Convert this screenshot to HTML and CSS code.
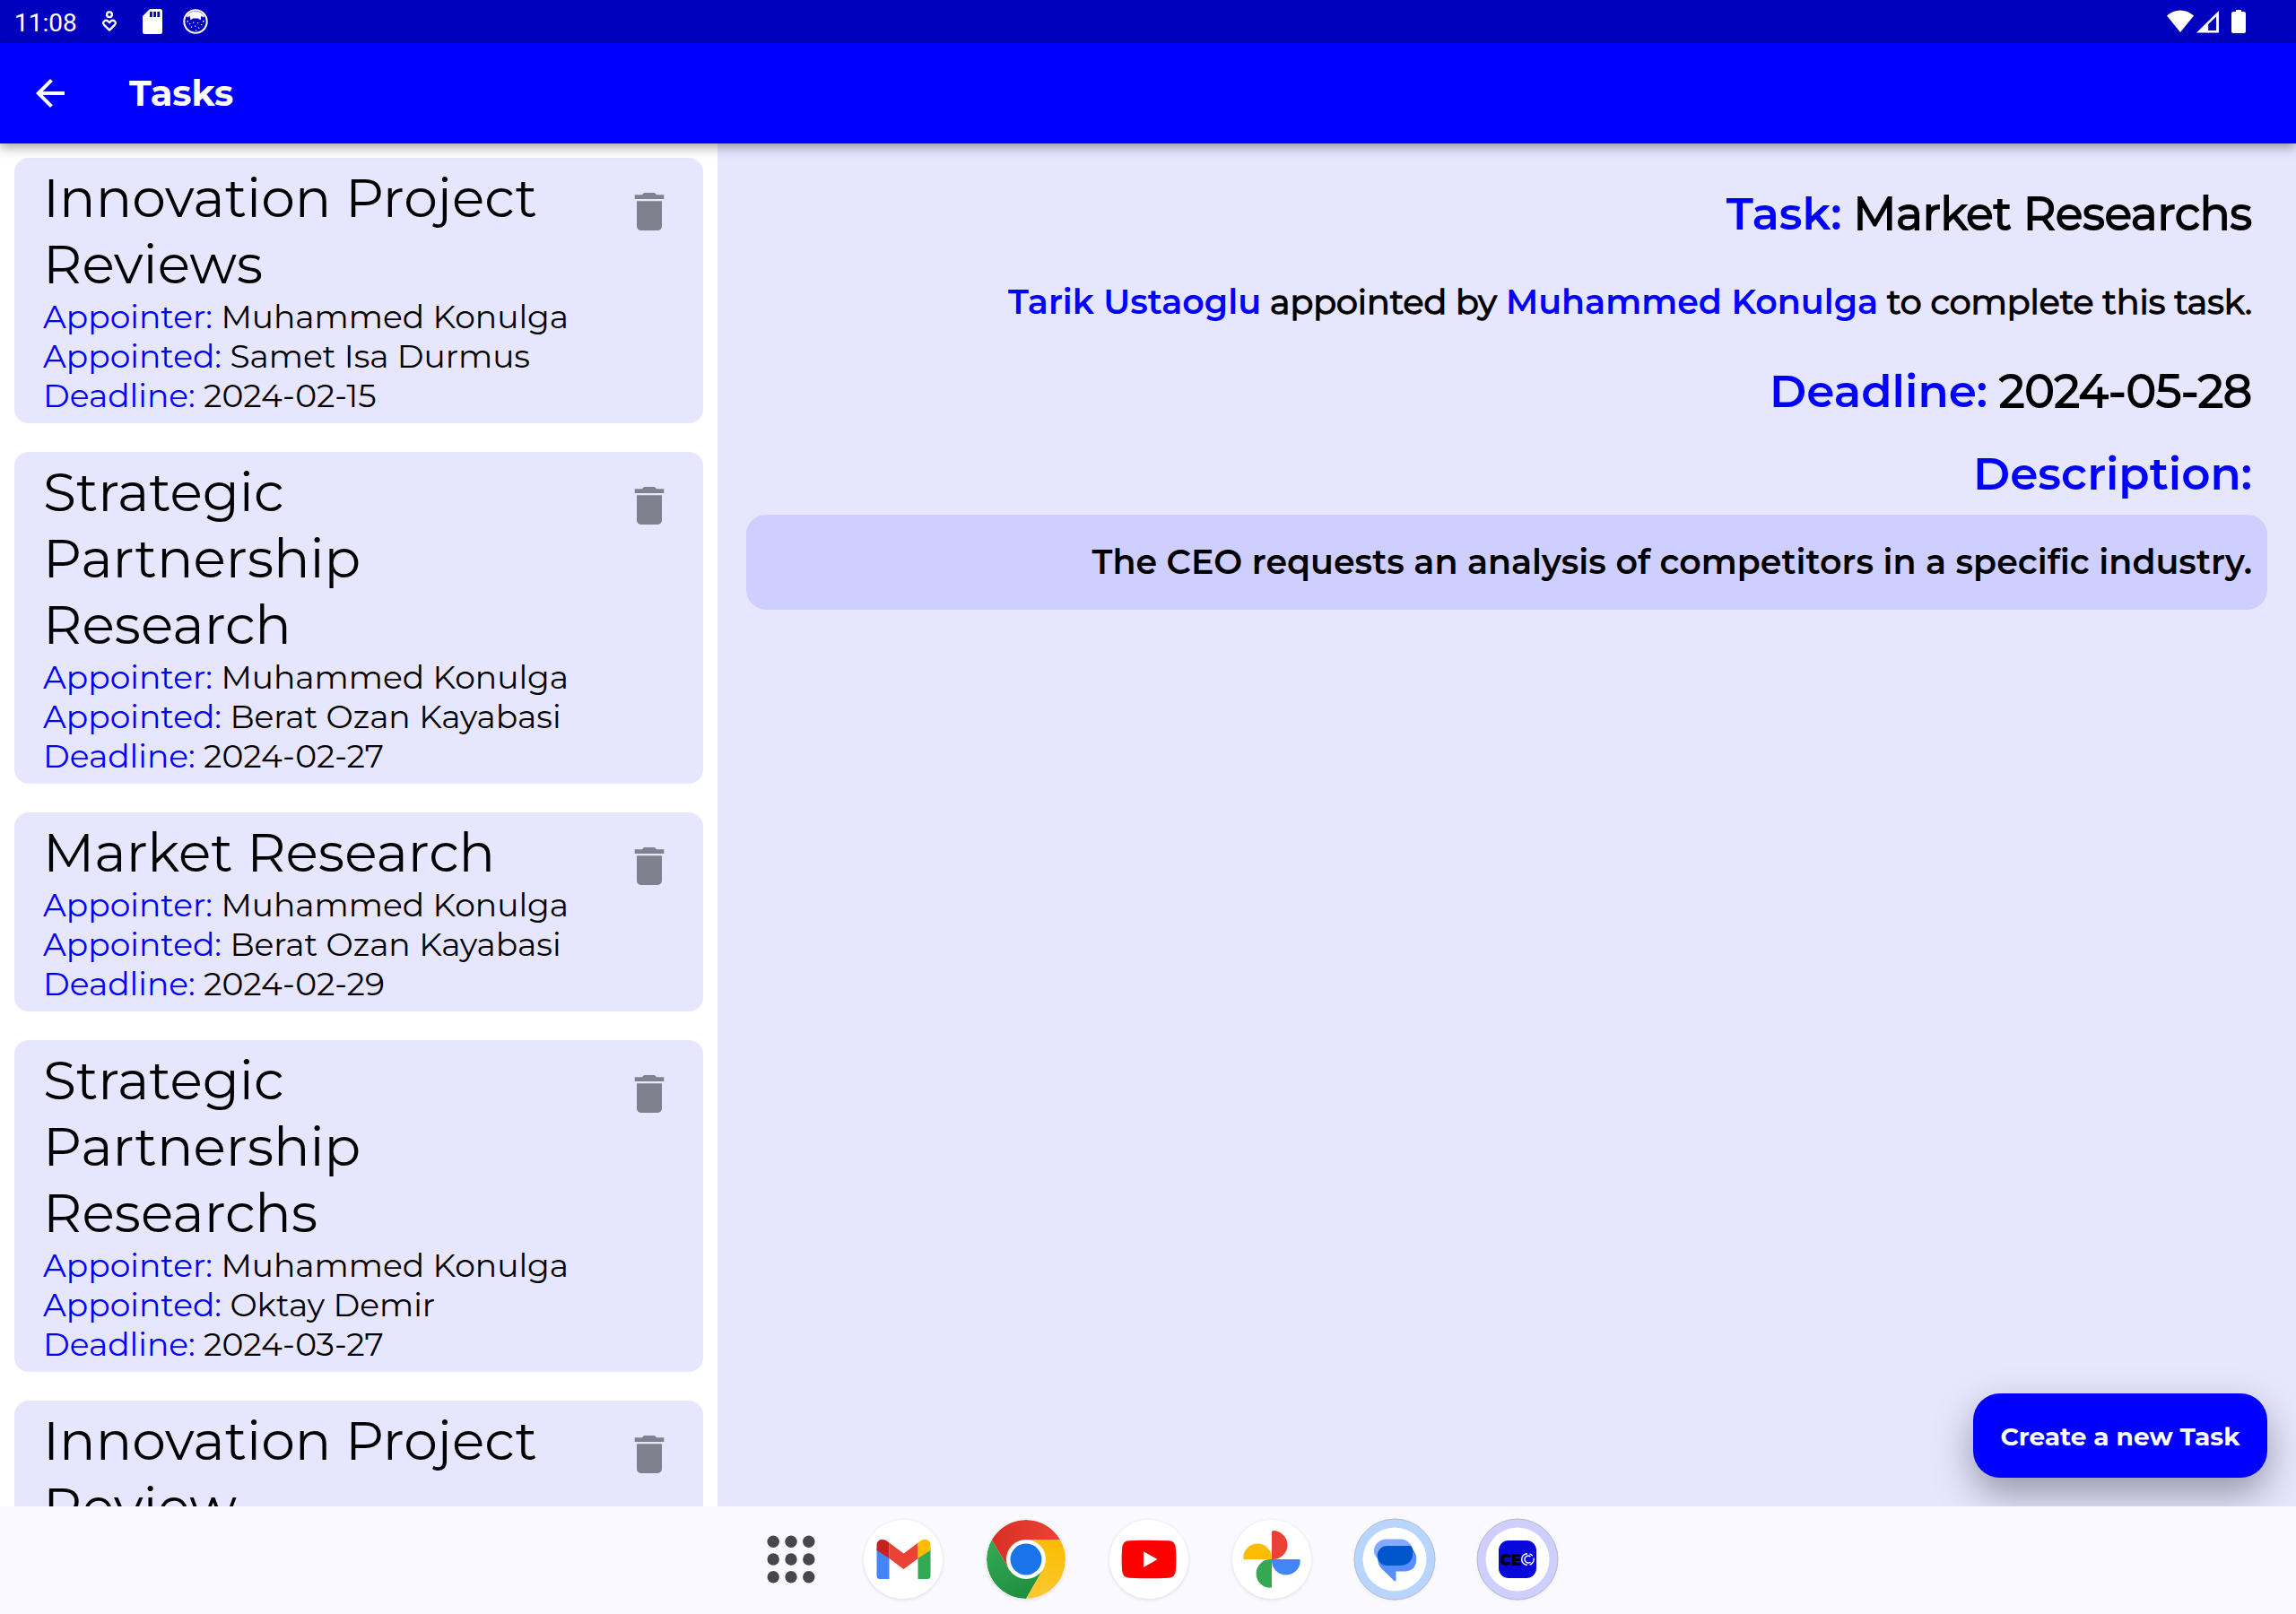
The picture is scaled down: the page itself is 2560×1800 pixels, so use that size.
FILE: index.html
```html
<!DOCTYPE html>
<html lang="en">
<head>
<meta charset="utf-8">
<title>Tasks</title>
<link rel="stylesheet" href="styles.css">
</head>
<body>
<svg class="defs" width="0" height="0" aria-hidden="true">
  <symbol id="trash" viewBox="0 0 24 24"><path d="M6 19c0 1.1.9 2 2 2h8c1.1 0 2-.9 2-2V7H6v12zM19 4h-3.5l-1-1h-5l-1 1H5v2h14V4z"/></symbol>
</svg>

<header class="status-bar">
  <span class="clock">11:08</span>
  <div class="notifications">
    <svg width="28" height="28" viewBox="0 0 28 28" fill="none" stroke="#fff" stroke-width="2.3"><circle cx="14" cy="6.3" r="2.9"/><path d="M14 23.6 8 17.6C5.200 14.500 9.600 11.200 12.500 13.700L14 15.300l1.500-1.600c2.900-2.500 7.300.8 4.500 3.900z" stroke-linejoin="round"/></svg>
    <svg width="28" height="28" viewBox="0 0 28 28"><path fill="#fff" d="M11 0h11.500A2.500 2.500 0 0 1 25 2.500v23a2.500 2.500 0 0 1-2.500 2.500h-17A2.500 2.500 0 0 1 3 25.500V8z"/><path fill="#0000bf" d="M11 3h2.800v6H11zm4.200 0H18v6h-2.800zm4.200 0h2.800v6h-2.800z"/></svg>
    <svg width="28" height="28" viewBox="0 0 28 28"><circle cx="14" cy="14" r="12.700" fill="none" stroke="#fff" stroke-width="2"/><path fill="#fff" d="M4 8C8.500.5 19.500.5 24 8L22.500 9.500 20.500 7.500 19.500 12.500 17 10.500h-6L8.500 12.500 7.500 7.500 5.500 9.500z"/><path fill="#fff" d="M4.500 13h1.500v1.500H4.500zm17.500 0h1.500v1.500H22zM7 16h1.300v1.300H7zm4-1.500h1.300v1.300H11zm5 .5h1.300v1.300H16zm4 2h1.300v1.300H20zm-7 1.500h1.300v1.300H13zm-4 1h1.300v1.300H9zm8 1h1.300v1.300H17zm-3 3h1.300v1.300H14z"/></svg>
  </div>
  <div class="system">
    <svg width="30" height="26" viewBox="0 0 30 26"><path fill="#fff" d="M0 6.500C8.500-1.500 21.500-1.500 30 6.500L15 25z"/></svg>
    <svg class="signal" width="25" height="26" viewBox="0 0 25 26"><path fill="#fff" fill-rule="evenodd" d="M0 25.500 25 1v24.500zM13.200 23H22V7.500l-8.800 8.600z"/></svg>
    <svg class="battery" width="16" height="26" viewBox="0 0 16 26"><path fill="#fff" d="M5 0h6v2h3a2 2 0 0 1 2 2v20a2 2 0 0 1-2 2H2a2 2 0 0 1-2-2V4a2 2 0 0 1 2-2h3z"/></svg>
  </div>
</header>

<div class="app-bar">
  <svg width="48" height="48" viewBox="0 0 24 24"><path fill="#fff" d="M20 11H7.830l5.590-5.590L12 4l-8 8 8 8 1.410-1.410L7.830 13H20v-2z"/></svg>
  <h1 class="app-title">Tasks</h1>
</div>

<main class="content">
  <section class="task-list">
    <article class="card">
      <div class="card-text">
        <h2 class="card-title">Innovation Project Reviews</h2>
        <p class="row"><span class="key">Appointer:</span> Muhammed Konulga</p>
        <p class="row"><span class="key">Appointed:</span> Samet Isa Durmus</p>
        <p class="row"><span class="key">Deadline:</span> 2024-02-15</p>
      </div>
      <svg class="trash" width="56" height="56"><use href="#trash"/></svg>
    </article>
    <article class="card">
      <div class="card-text">
        <h2 class="card-title">Strategic Partnership Research</h2>
        <p class="row"><span class="key">Appointer:</span> Muhammed Konulga</p>
        <p class="row"><span class="key">Appointed:</span> Berat Ozan Kayabasi</p>
        <p class="row"><span class="key">Deadline:</span> 2024-02-27</p>
      </div>
      <svg class="trash" width="56" height="56"><use href="#trash"/></svg>
    </article>
    <article class="card">
      <div class="card-text">
        <h2 class="card-title">Market Research</h2>
        <p class="row"><span class="key">Appointer:</span> Muhammed Konulga</p>
        <p class="row"><span class="key">Appointed:</span> Berat Ozan Kayabasi</p>
        <p class="row"><span class="key">Deadline:</span> 2024-02-29</p>
      </div>
      <svg class="trash" width="56" height="56"><use href="#trash"/></svg>
    </article>
    <article class="card">
      <div class="card-text">
        <h2 class="card-title">Strategic Partnership Researchs</h2>
        <p class="row"><span class="key">Appointer:</span> Muhammed Konulga</p>
        <p class="row"><span class="key">Appointed:</span> Oktay Demir</p>
        <p class="row"><span class="key">Deadline:</span> 2024-03-27</p>
      </div>
      <svg class="trash" width="56" height="56"><use href="#trash"/></svg>
    </article>
    <article class="card">
      <div class="card-text">
        <h2 class="card-title">Innovation Project Review</h2>
      </div>
      <svg class="trash" width="56" height="56"><use href="#trash"/></svg>
    </article>
  </section>

  <section class="detail">
    <p class="headline"><span class="label">Task:</span> <span class="value">Market Researchs</span></p>
    <p class="summary"><span class="label">Tarik Ustaoglu</span> <span class="value">appointed by</span> <span class="label">Muhammed Konulga</span> <span class="value">to complete this task.</span></p>
    <p class="headline deadline"><span class="label">Deadline:</span> <span class="value">2024-05-28</span></p>
    <p class="headline description-label"><span class="label">Description:</span></p>
    <p class="description">The CEO requests an analysis of competitors in a specific industry.</p>
    <button class="create">Create a new Task</button>
  </section>
</main>

<nav class="dock">
  <svg width="64" height="64" viewBox="0 0 64 64" fill="#47464f"><circle cx="12.200" cy="12.200" r="6.700"/><circle cx="32" cy="12.200" r="6.700"/><circle cx="51.800" cy="12.200" r="6.700"/><circle cx="12.200" cy="32" r="6.700"/><circle cx="32" cy="32" r="6.700"/><circle cx="51.800" cy="32" r="6.700"/><circle cx="12.200" cy="51.800" r="6.700"/><circle cx="32" cy="51.800" r="6.700"/><circle cx="51.800" cy="51.800" r="6.700"/></svg>
  <svg class="app" width="88" height="88" viewBox="0 0 88 88">
    <circle cx="44" cy="44" r="44" fill="#fff"/>
    <path fill="#4285f4" d="M14.500 32 28.500 42.500V66H18a3.500 3.500 0 0 1-3.500-3.500z"/>
    <path fill="#34a853" d="M60.500 42.500 74.500 32v30.500A3.500 3.500 0 0 1 71 66H60.500z"/>
    <path fill="#ea4335" d="M28.500 25.500 44.500 37.500l16-12v17.500L44.500 55l-16-12z"/>
    <path fill="#c5221f" d="M14.500 34v-6c0-6 6.500-7.300 10.500-5l3.500 2.500v17.500z"/>
    <path fill="#fbbc04" d="M60.500 25.500 64 23c4-2.800 10.500-1 10.500 5v6l-14 9z"/>
  </svg>
  <svg class="app" width="88" height="88" viewBox="0 0 88 88">
    <defs>
      <linearGradient id="cr" x1="0" x2="1"><stop offset="0" stop-color="#d93025"/><stop offset="1" stop-color="#ea4335"/></linearGradient>
      <linearGradient id="cy" x1=".3" y1="1" x2=".6" y2="0"><stop offset="0" stop-color="#fcc934"/><stop offset="1" stop-color="#fbbc04"/></linearGradient>
      <linearGradient id="cg" x1=".7" y1="1" x2=".2" y2="0"><stop offset="0" stop-color="#1e8e3e"/><stop offset="1" stop-color="#34a853"/></linearGradient>
    </defs>
    <path fill="url(#cg)" d="M44 88A44 44 0 0 1 5.900 22L24.950 55 44 66 63.050 55z"/>
    <path fill="url(#cy)" d="M44 88 63.050 55V33L44 22h38.100A44 44 0 0 1 44 88z"/>
    <path fill="url(#cr)" d="M5.900 22A44 44 0 0 1 82.100 22H44L24.950 55z"/>
    <circle cx="44" cy="44" r="22" fill="#fff"/><circle cx="44" cy="44" r="17.500" fill="#1a73e8"/>
  </svg>
  <svg class="app" width="88" height="88" viewBox="0 0 88 88">
    <circle cx="44" cy="44" r="44" fill="#fff"/>
    <path fill="#f00" d="M22 23.300Q44 22 66 23.300 73.200 23.600 73.800 31 75 44 73.800 57 73.200 64.400 66 64.700 44 66 22 64.700 14.800 64.400 14.200 57 13 44 14.200 31 14.800 23.600 22 23.300z"/>
    <path fill="#fff" d="M38 35.300 53.500 44 38 53z"/>
  </svg>
  <svg class="app" width="88" height="88" viewBox="0 0 88 88">
    <circle cx="44" cy="44" r="44" fill="#fff"/>
    <path fill="#ea4335" d="M44 44V13.500q0-1.500 1.500-1.500a16 16 0 0 1 0 32z"/>
    <path fill="#4285f4" d="M44 44h30.500q1.300 0 1.300 1.500a15.900 15.900 0 0 1-31.800 0z"/>
    <path fill="#34a853" d="M44 44v30.500q0 1.300-1.500 1.300a15.900 15.900 0 0 1 0-31.800z"/>
    <path fill="#fbbc04" d="M44 44H13.500q-1.300 0-1.300-1.500a15.900 15.900 0 0 1 31.800 0z"/>
  </svg>
  <svg class="app ring" width="88" height="88" viewBox="0 0 88 88">
    <circle cx="44" cy="44" r="45" fill="#b8d5ff" stroke="#b9bac4"/>
    <circle cx="44" cy="44" r="35.500" fill="#fff"/>
    <path fill="#85a9ff" d="M35 21.500h15.500A13.500 13.500 0 0 1 64 35L60 50H33L25 43Q20.800 39.500 20.800 35A14.200 13.500 0 0 1 35 21.500z"/>
    <path fill="#598eff" d="M63.500 32.500Q68.300 37 68.300 43 68.300 57.500 54.500 57.500H45.500V67.500Q45.300 69.200 43.800 68.200L29 54Q25 49 25 42L40 48z"/>
    <path fill="#0057cc" d="M35.500 29H62Q64.500 31 64.500 35 64.500 51 49 51H35.500A10.800 11 0 0 1 35.500 29z"/>
  </svg>
  <svg class="app ring" width="88" height="88" viewBox="0 0 88 88">
    <circle cx="44" cy="44" r="45" fill="#cfcfff" stroke="#b9bac4"/>
    <circle cx="44" cy="44" r="35.500" fill="#fff"/>
    <rect x="23" y="23" width="42" height="42" rx="11" fill="#0808dc"/>
    <text class="ceo" x="24.500" y="50.500" textLength="24" lengthAdjust="spacingAndGlyphs">CE</text>
    <g fill="none" stroke="#fff" stroke-width="1.400"><path d="M55 50.300A6.300 6.300 0 0 1 55 37.700M57.500 37.900A6.300 6.300 0 0 1 60.800 40.200M62 42.500A6.300 6.300 0 0 1 57.500 50.100M58.500 41A3.900 3.900 0 1 0 58.500 47"/></g>
  </svg>
</nav>
</body>
</html>
```
FILE: styles.css
```css
* { box-sizing: border-box; margin: 0; padding: 0; }

body {
  width: 2560px;
  height: 1800px;
  overflow: hidden;
  display: flex;
  flex-direction: column;
  background: #fff;
  color: #000;
  font-family: Montserrat, Inter, sans-serif;
}

svg { display: block; flex: none; }
.defs { position: absolute; }

.status-bar {
  height: 48px;
  flex: none;
  padding: 0 56px 0 16px;
  display: flex;
  align-items: center;
  background: #0000bf;
  color: #fff;
}
.clock { width: 92px; font: 400 28px/32px Roboto, sans-serif; padding-top: 3px; }
.notifications { display: flex; gap: 20px; }
.system { display: flex; margin-left: auto; }
.signal { margin-left: 3px; }
.battery { margin-left: 14px; }

.app-bar {
  height: 112px;
  flex: none;
  padding: 0 32px;
  display: flex;
  align-items: center;
  gap: 64px;
  background: #00f;
  color: #fff;
  position: relative;
  z-index: 1;
  box-shadow: 0 4px 12px rgba(0, 0, 0, .38);
}
.app-title { font-size: 40px; font-weight: 700; line-height: 48px; }

.content { flex: 1; min-height: 0; display: flex; overflow: hidden; }

.task-list {
  width: 800px;
  flex: none;
  padding: 16px;
  display: flex;
  flex-direction: column;
  gap: 32px;
  overflow: hidden;
}
.card {
  flex: none;
  padding: 8px 32px;
  display: flex;
  justify-content: space-between;
  background: #e6e6ff;
  border-radius: 16px;
}
.card-text { width: 600px; }
.card-title { width: 570px; margin-bottom: -1px; font-size: 60px; font-weight: 400; line-height: 74px; }
.row { font-size: 36px; line-height: 44px; white-space: nowrap; }
.row:last-child { margin-bottom: 1px; }
.key, .label { color: #00f; }
.trash { margin: 24px 0 0; fill: #80808e; }

.detail {
  flex: 1;
  padding: 47px 32px 32px;
  display: flex;
  flex-direction: column;
  background: #e6e6ff;
  text-align: right;
}
.headline { padding-right: 17px; font-size: 50px; line-height: 64px; }
.summary { margin-top: 41px; padding-right: 17px; font-size: 38px; line-height: 50px; }
.deadline { margin-top: 43px; }
.description-label { margin-top: 28px; }
.label { font-weight: 600; }
.value { -webkit-text-stroke: 1.4px #000; }
.headline .value { -webkit-text-stroke-width: 2px; }
.description {
  margin-top: 13px;
  padding: 28px 17px 28px;
  background: #cfcfff;
  border-radius: 22px;
  font-size: 38px;
  font-weight: 600;
  line-height: 50px;
}
.create {
  margin-top: auto;
  align-self: flex-end;
  width: 328px;
  height: 94px;
  border: 0;
  border-radius: 30px;
  background: #00f;
  color: #fff;
  font: 700 28px/34px Montserrat, Inter, sans-serif;
  white-space: nowrap;
  padding-top: 2px;
  box-shadow: 0 18px 44px rgba(0, 0, 0, .35);
}

.dock {
  height: 120px;
  flex: none;
  padding: 0 0 2px 849.5px;
  display: flex;
  align-items: center;
  gap: 49px;
  background: #faf9ff;
  position: relative;
}
.app { border-radius: 50%; box-shadow: 0 1px 4px rgba(0, 0, 0, .12); }
.ring { overflow: visible; }
.ceo { font: 900 18px Montserrat, Inter, sans-serif; fill: #000; }
```
